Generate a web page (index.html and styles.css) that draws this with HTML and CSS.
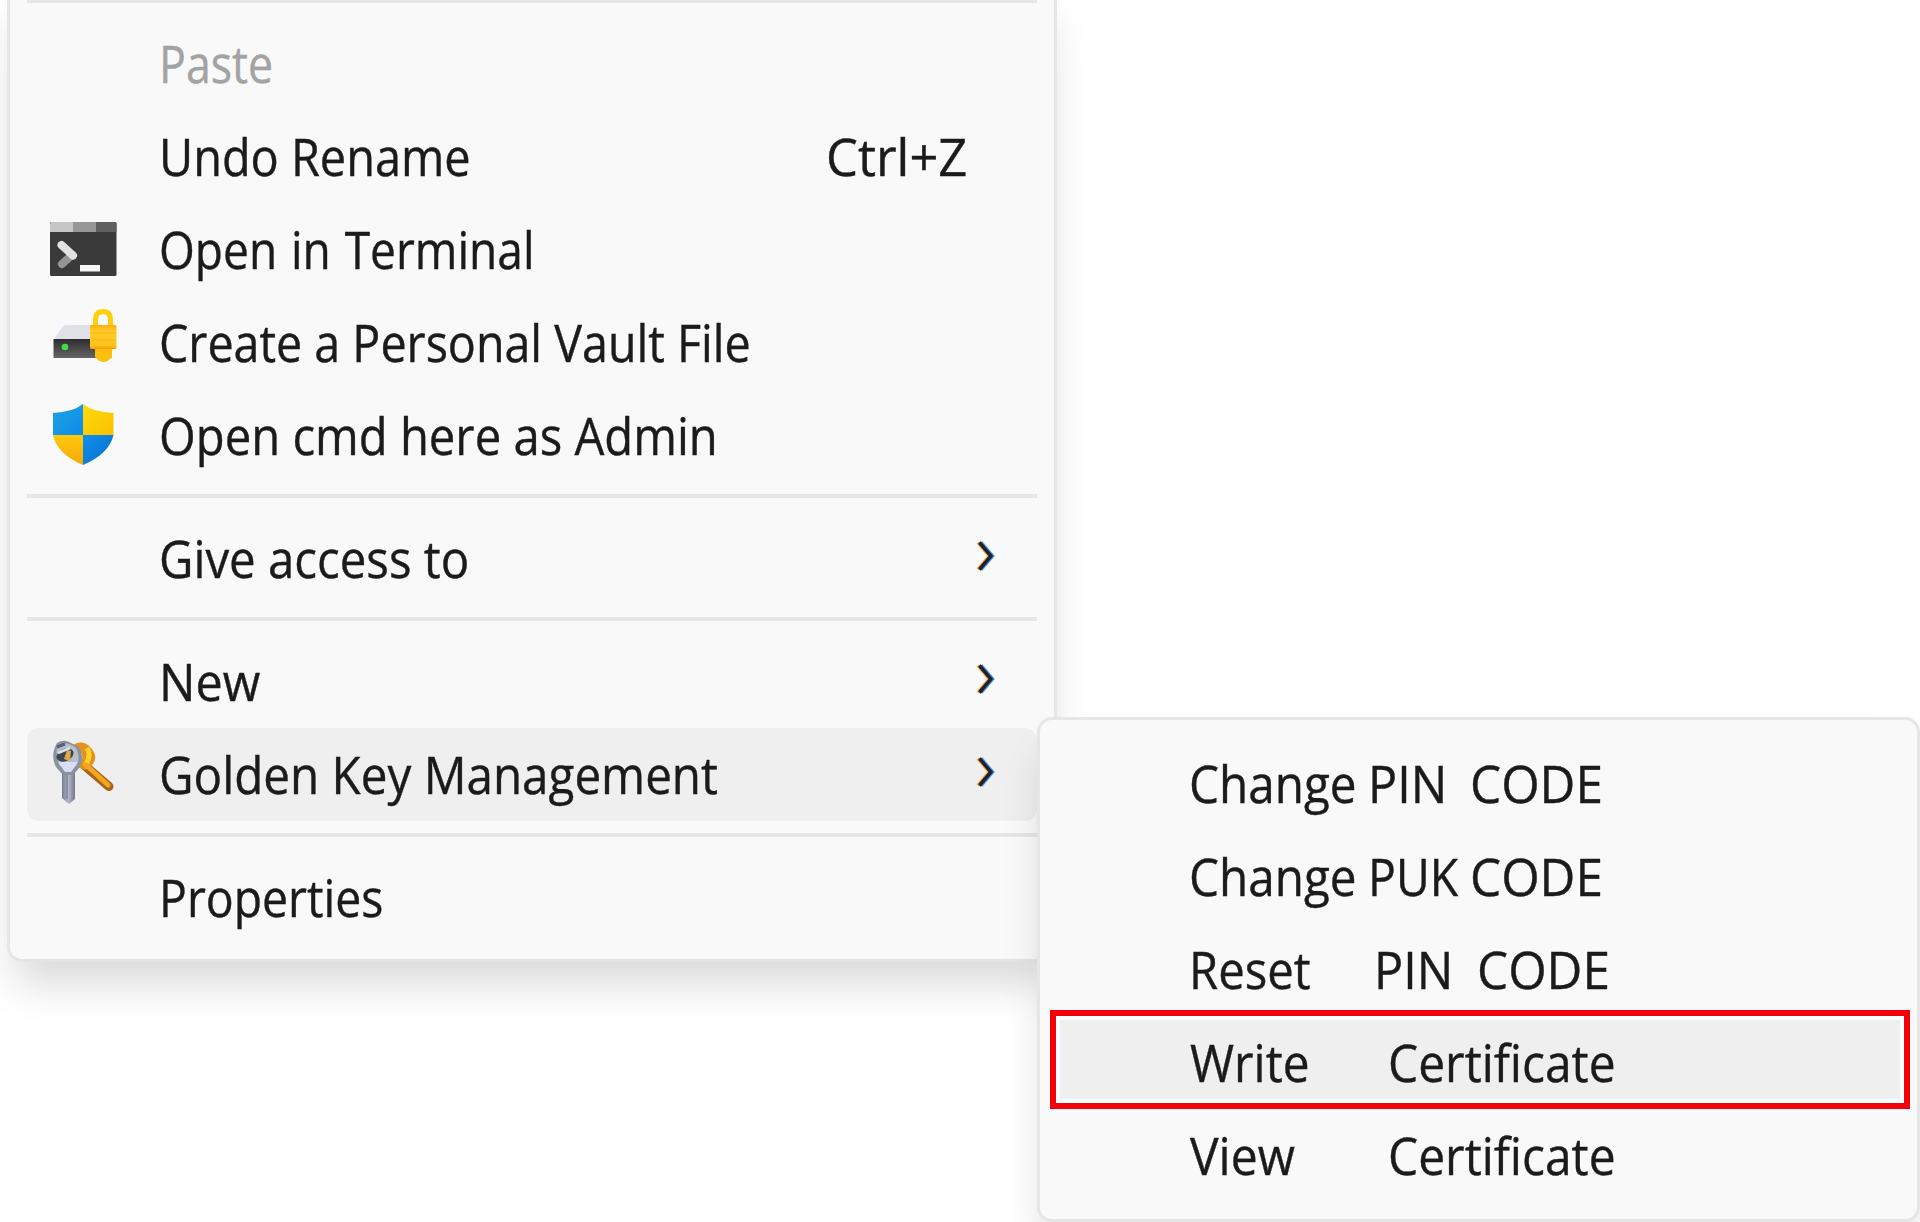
FILE: index.html
```
<!DOCTYPE html>
<html lang="en">
<head>
<meta charset="utf-8">
<title>Context menu</title>
<link rel="stylesheet" href="styles.css">
</head>
<body>
<svg width="0" height="0" class="defs" aria-hidden="true">
  <defs>
    <linearGradient id="blue" x1="0" y1="0" x2="1" y2="1"><stop offset="0" stop-color="#25a3e2"/><stop offset="1" stop-color="#0a8be8"/></linearGradient>
    <linearGradient id="blue2" x1="0" y1="0" x2="1" y2="1"><stop offset="0" stop-color="#0f8eee"/><stop offset="1" stop-color="#0870c8"/></linearGradient>
    <linearGradient id="yellow" x1="0" y1="0" x2="1" y2="1"><stop offset="0" stop-color="#ffdb0a"/><stop offset="1" stop-color="#f9c002"/></linearGradient>
    <linearGradient id="amber" x1="0" y1="0" x2="0" y2="1"><stop offset="0" stop-color="#ffc90c"/><stop offset="1" stop-color="#f5a808"/></linearGradient>
    <linearGradient id="lock" x1="0" y1="0" x2="0" y2="1"><stop offset="0" stop-color="#fbab0c"/><stop offset=".25" stop-color="#ffcd28"/><stop offset=".85" stop-color="#ffc41c"/><stop offset="1" stop-color="#f39c08"/></linearGradient>
    <linearGradient id="drive" x1="0" y1="0" x2="0" y2="1"><stop offset="0" stop-color="#2c2c30"/><stop offset="1" stop-color="#666"/></linearGradient>
    <linearGradient id="silver" x1="0" y1="0" x2="1" y2="0"><stop offset="0" stop-color="#777c8c"/><stop offset=".5" stop-color="#b4b7cc"/><stop offset="1" stop-color="#737787"/></linearGradient>
    <symbol id="chevron" viewBox="0 0 24 36">
      <path d="M2.800 4.500 14.300 18 2.800 31.500" stroke="#f5b44e"/>
      <path d="M6 4.500 17.500 18 6 31.500" stroke="#3c93e0"/>
      <path d="M4.400 4.500 15.900 18 4.400 31.500" stroke="#202030"/>
    </symbol>
  </defs>
</svg>

<nav class="menu main">
  <div class="sep"></div>
  <div class="item disabled"><span class="icon"></span><span class="label paste">Paste</span></div>
  <div class="item"><span class="icon"></span><span class="label undo">Undo Rename</span><span class="shortcut">Ctrl+Z</span></div>
  <div class="item">
    <svg class="icon" viewBox="0 0 131 93">
      <rect x="23" y="19" width="66.500" height="54" rx="1.500" fill="#3a3a3a"/>
      <path d="M24.500 19H46V29H23V20.500Z" fill="#c6c6c6"/><path d="M46 19H69V29H46Z" fill="#979797"/><path d="M69 19H88L89.500 20.500V29H69Z" fill="#606060"/>
      <path d="M45 52 35 61" stroke="#949494" stroke-width="8" stroke-linecap="round"/>
      <path d="M34.500 42 46 52.500" stroke="#e2e2e2" stroke-width="8" stroke-linecap="round"/>
      <path d="M53 62H73V68.500H53Z" fill="#f8f8f8"/>
    </svg>
    <span class="label terminal">Open in Terminal</span>
  </div>
  <div class="item">
    <svg class="icon" viewBox="0 0 131 93">
      <path d="M38 29H70V44H27Q32 34 38 29Z" fill="#dfe2e7"/>
      <rect x="26.500" y="43" width="58" height="19" fill="url(#drive)"/>
      <circle cx="38" cy="51" r="3.300" fill="#42da4a"/>
      <path d="M68.500 31V24Q68.500 15.500 76 15.500T83.500 24V31" fill="none" stroke="#ffcf0e" stroke-width="5"/>
      <path d="M68 52H85V61Q76.500 71 68 61Z" fill="#fbc00c"/>
      <rect x="63" y="29" width="26.500" height="24" rx="1.500" fill="url(#lock)"/>
      <path d="M64 37H89M64 44H89M68 55H84" stroke="#f9b414" stroke-width="1"/>
    </svg>
    <span class="label vault">Create a Personal Vault File</span>
  </div>
  <div class="item">
    <svg class="icon" viewBox="0 0 131 93">
      <path d="M56 15Q46 23 26 24V46H56Z" fill="url(#blue)"/>
      <path d="M56 15Q66 23 86.500 24V46H56Z" fill="url(#yellow)"/>
      <path d="M26 46H56V76Q30 65 26 46Z" fill="url(#amber)"/>
      <path d="M56 46H86.500Q82 65 56 76Z" fill="url(#blue2)"/>
    </svg>
    <span class="label admin">Open cmd here as Admin</span>
  </div>
  <div class="sep"></div>
  <div class="item"><span class="icon"></span><span class="label give">Give access to</span><svg class="chevron"><use href="#chevron"/></svg></div>
  <div class="sep"></div>
  <div class="item"><span class="icon"></span><span class="label new">New</span><svg class="chevron"><use href="#chevron"/></svg></div>
  <div class="item active">
    <svg class="icon" viewBox="0 0 131 93">
      <path d="M57 37 82 58.500" stroke="#a8641c" stroke-width="9" stroke-linecap="round"/>
      <path d="M46 17Q56 11 64 20T65 37L59 42 50 39Q59 30 53 23Z" fill="#e4921c"/>
      <path d="M60 20Q65 28 58 38" fill="none" stroke="#ffd22a" stroke-width="5"/>
      <path d="M59 37 81 57" stroke="#f5a51e" stroke-width="5" stroke-linecap="round"/>
      <path d="M35 42H48V71L42 76 35 70Z" fill="url(#silver)"/>
      <path d="M40 47V71" stroke="#8b8ea2" stroke-width="2"/>
      <path d="M30 15Q36 11 42 14L52 19Q58 29 53 39L46 47H36L29 39Q23 27 30 15Z" fill="#8b929f"/>
      <path d="M31 17Q40 13 49 20 54 30 49 38L43 44 33 38Q27 27 31 17Z" fill="#b7bfcb"/>
      <path d="M31 34H51L44 44H38Z" fill="#dadbf6"/>
      <ellipse cx="38" cy="27" rx="9" ry="6" fill="#3d4553" transform="rotate(-25 38 27)"/>
      <path d="M40 22 44 23 43 33 37 31Z" fill="#dfaa46"/>
      <path d="M31 25 43 20" stroke="#dbe0e8" stroke-width="2.500"/>
      <path d="M30 19 38 16" stroke="#56616d" stroke-width="3"/>
    </svg>
    <span class="label golden">Golden Key Management</span><svg class="chevron"><use href="#chevron"/></svg>
  </div>
  <div class="sep"></div>
  <div class="item"><span class="icon"></span><span class="label props">Properties</span></div>
</nav>

<nav class="menu sub">
  <div class="item"><span class="w change">Change </span><span class="w pin">PIN  </span><span class="w code">CODE</span></div>
  <div class="item"><span class="w change">Change </span><span class="w puk">PUK </span><span class="w code">CODE</span></div>
  <div class="item"><span class="w reset">Reset     </span><span class="w pin">PIN  </span><span class="w code">CODE</span></div>
  <div class="item marked"><span class="w write">Write      </span><span class="w cert">Certificate</span></div>
  <div class="item"><span class="w view">View       </span><span class="w cert">Certificate</span></div>
</nav>
</body>
</html>
```
FILE: styles.css
```
*, *::before { box-sizing: border-box; }

body {
  position: relative;
  margin: 0;
  width: 1920px;
  height: 1222px;
  overflow: hidden;
  display: flow-root;
  background: #fff;
  color: #1b1b1b;
  font: 51.500px/92px "Open Sans", "Noto Sans", sans-serif;
  -webkit-text-stroke: .4px currentColor;
}

.defs { position: absolute; }

.menu {
  background: #f9f9f9;
  border: 3px solid #e6e6e6;
  border-radius: 15px;
  box-shadow: 0 30px 42px -8px rgba(0, 0, 0, .15);
}

.main {
  width: 1050px;
  margin: -16px 0 0 7px;
  padding: 0 17px 15px;
  border-bottom-color: #e4e4e4;
}

.sep {
  height: 30px;
  padding-top: 12px;
}
.sep::before {
  content: "";
  display: block;
  height: 4px;
  background: #e6e6e6;
}

.item {
  display: flex;
  height: 93px;
  border-radius: 12px;
  white-space: pre;
}
.disabled { color: #a3a3a3; }
.active { background: #efefef; }

.icon {
  flex: 0 0 132px;
  height: 93px;
}
svg.icon {
  flex-basis: 131px;
  margin-right: 1px;
}

/* Labels are condensed to the narrow widths of the system menu font */
.label, .w, .shortcut { transform-origin: 0 0; }
.label { flex: 0 0 667px; }
.paste { transform: scaleX(.868); }
.undo { transform: scaleX(.91); }
.terminal { transform: scaleX(.895); word-spacing: 2px; }
.vault { transform: scaleX(.905); }
.admin { transform: scaleX(.917); }
.give { transform: scaleX(.92); }
.new { transform: scaleX(.94); }
.golden { transform: scaleX(.924); }
.props { transform: scaleX(.9); }
.shortcut { transform: scaleX(.983); }

.chevron {
  width: 24px;
  height: 36px;
  margin: 26px 0 0 149px;
  fill: none;
  stroke-width: 3.500px;
}

.sub {
  position: absolute;
  left: 1037px;
  top: 717px;
  width: 883px;
  height: 505px;
  padding: 17px 18px 0 21px;
  isolation: isolate;
}
.sub .item {
  padding-left: 127.500px;
  line-height: 93px;
}

.w { flex: none; }
.change { width: 179.300px; transform: scaleX(.925); }
.reset { width: 185.500px; transform: scaleX(.917); }
.write { width: 198px; margin-left: 1px; transform: scaleX(.927); }
.view { width: 198px; margin-left: 1px; transform: scaleX(.932); }
.pin { width: 102.700px; transform: scaleX(.942); }
.puk { width: 102.700px; transform: scaleX(.9); }
.code { transform: scaleX(.96); }
.cert { transform: scaleX(.93); }

.marked { position: relative; }
.marked::before {
  content: "";
  position: absolute;
  z-index: -1;
  left: -11px;
  top: -6px;
  width: 860px;
  height: 99px;
  background: #efefef;
  border: 6px solid #f3000b;
  box-shadow: inset 0 0 0 4px #f4ffff;
}
```
